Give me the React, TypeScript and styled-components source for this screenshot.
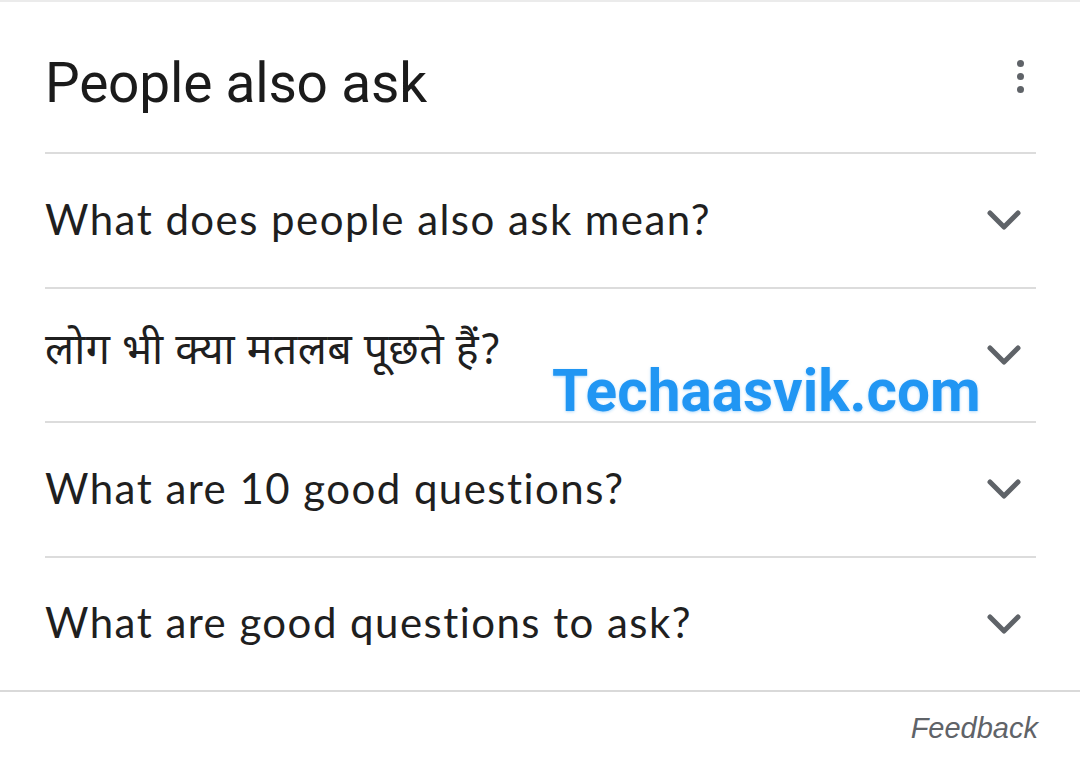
import React from "react";
import styled, { createGlobalStyle } from "styled-components";

const Global = createGlobalStyle`
  html, body { margin: 0; padding: 0; background: #ffffff; }
  body { font-family: Roboto, "Noto Sans", sans-serif; }
`;

const Page = styled.div`
  position: relative;
  width: 1080px;
  height: 764px;
  background: #ffffff;
  border-top: 2px solid #ebebeb;
  box-sizing: border-box;
  overflow: hidden;
`;

const Header = styled.div`
  display: flex;
  align-items: flex-start;
  justify-content: space-between;
  height: 150px;
  padding: 0 56px 0 45px;
  box-sizing: border-box;
`;

const Title = styled.h2`
  margin: 0;
  padding-top: 49px;
  font-family: Roboto, sans-serif;
  font-weight: 400;
  font-size: 55px;
  line-height: 64px;
  color: #1b1b1b;
  letter-spacing: -0.2px;
`;

const MoreButton = styled.div`
  display: flex;
  flex-direction: column;
  gap: 6px;
  padding-top: 58px;
`;

const Dot = styled.span`
  width: 7px;
  height: 7px;
  border-radius: 50%;
  background: #5f6368;
`;

const List = styled.div`
  padding: 0 44px 0 45px;
`;

const Row = styled.div`
  display: flex;
  align-items: center;
  justify-content: space-between;
  height: 134.5px;
  box-sizing: border-box;
  border-top: 2px solid #dcdcdc;
`;

const Question = styled.span<{ $hindi?: boolean }>`
  font-family: ${(p) =>
    p.$hindi ? `"Noto Sans Devanagari", "Lohit Devanagari", "Mangal", sans-serif` : `Lato, "Open Sans", sans-serif`};
  font-size: ${(p) => (p.$hindi ? "43px" : "42px")};
  color: #1f1f1f;
  letter-spacing: ${(p) => (p.$hindi ? "0.4px" : "1.45px")};
  margin-top: -3px;
`;

const Chevron = styled.svg`
  width: 34px;
  height: 20px;
  margin-right: 15px;
  flex: none;
`;

const Footer = styled.div`
  border-top: 2px solid #d9d9d9;
  display: flex;
  justify-content: flex-end;
  padding: 20px 42px 0 0;
`;

const Feedback = styled.span`
  font-family: "Liberation Sans", Arial, sans-serif;
  font-style: italic;
  font-size: 29px;
  color: #5f6368;
`;

const Watermark = styled.div`
  position: absolute;
  left: 552px;
  top: 354px;
  font-family: Roboto, sans-serif;
  font-weight: 700;
  font-size: 58.5px;
  line-height: 70px;
  color: #2196f3;
  text-shadow: 0 1px 3px rgba(33, 150, 243, 0.35);
  white-space: nowrap;
`;

const questions: { text: string; hindi?: boolean }[] = [
  { text: "What does people also ask mean?" },
  { text: "लोग भी क्या मतलब पूछते हैं?", hindi: true },
  { text: "What are 10 good questions?" },
  { text: "What are good questions to ask?" },
];

const ChevronIcon = () => (
  <Chevron viewBox="0 0 34 20">
    <path d="M3 3 L17 17 L31 3" fill="none" stroke="#5f6368" strokeWidth="5" strokeLinecap="round" strokeLinejoin="round" />
  </Chevron>
);

export default function App() {
  return (
    <Page>
      <Global />
      <Header>
        <Title>People also ask</Title>
        <MoreButton>
          <Dot />
          <Dot />
          <Dot />
        </MoreButton>
      </Header>
      <List>
        {questions.map((q) => (
          <Row key={q.text}>
            <Question $hindi={q.hindi}>{q.text}</Question>
            <ChevronIcon />
          </Row>
        ))}
      </List>
      <Footer>
        <Feedback>Feedback</Feedback>
      </Footer>
      <Watermark>Techaasvik.com</Watermark>
    </Page>
  );
}
